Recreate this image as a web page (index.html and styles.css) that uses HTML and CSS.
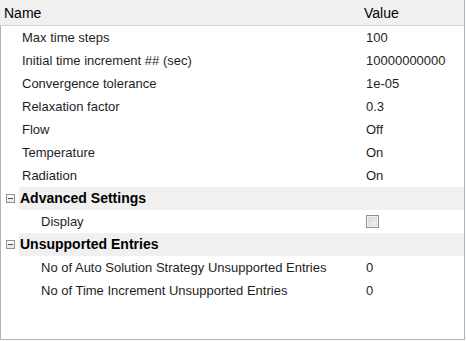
FILE: index.html
```html
<!DOCTYPE html>
<html lang="en">
<head>
    <meta charset="UTF-8">
    <title>Property Grid</title>
    <link rel="stylesheet" href="styles.css">
</head>
<body>
    <div class="tree">
        <div class="head">
            <div class="col-name">Name</div>
            <div class="col-value">Value</div>
        </div>

        <div class="body">
            <div class="row"><div class="name">Max time steps</div><div class="value">100</div></div>
            <div class="row"><div class="name">Initial time increment ## (sec)</div><div class="value">10000000000</div></div>
            <div class="row"><div class="name">Convergence tolerance</div><div class="value">1e-05</div></div>
            <div class="row"><div class="name">Relaxation factor</div><div class="value">0.3</div></div>
            <div class="row"><div class="name">Flow</div><div class="value">Off</div></div>
            <div class="row"><div class="name">Temperature</div><div class="value">On</div></div>
            <div class="row"><div class="name">Radiation</div><div class="value">On</div></div>

            <div class="group">
                <span class="expander"></span>
                <div class="group-band">Advanced Settings</div>
            </div>
            <div class="row child"><div class="name">Display</div><div class="value"><span class="checkbox"></span></div></div>

            <div class="group">
                <span class="expander"></span>
                <div class="group-band">Unsupported Entries</div>
            </div>
            <div class="row child"><div class="name">No of Auto Solution Strategy Unsupported Entries</div><div class="value">0</div></div>
            <div class="row child"><div class="name">No of Time Increment Unsupported Entries</div><div class="value">0</div></div>
        </div>
    </div>
</body>
</html>
```

FILE: styles.css
```css
:root {
    --frame-color: #abb3bb;
    --header-bg: #f0f0f0;
    --header-line: #d5d5d5;
    --band-bg: #f0f0f0;
    --text-color: #1e1e1e;
}

body {
    margin: 0;
    padding: 0;
    background: #fff;
    font-family: 'Liberation Sans', Arial, sans-serif;
    font-size: 13px;
    color: var(--text-color);
}

.tree {
    width: 464px;
    height: 340px;
    display: flex;
    flex-direction: column;
    border-right: 1px solid var(--frame-color);
}

.head {
    display: grid;
    grid-template-columns: 364px 1fr;
    height: 25px;
    align-items: center;
    background-color: var(--header-bg);
    border-bottom: 1px solid var(--header-line);
    font-size: 14px;
    color: #000;
}

.col-name {
    padding-left: 4px;
}

.body {
    flex: 1;
    border-left: 1px solid var(--frame-color);
    border-bottom: 1px solid var(--frame-color);
}

.row {
    display: grid;
    grid-template-columns: 365px 1fr;
    height: 23px;
    align-items: center;
}

.row .name {
    padding-left: 21px;
    white-space: nowrap;
}

.row.child .name {
    padding-left: 40px;
}

.group {
    display: flex;
    align-items: center;
    height: 23px;
}

.expander {
    position: relative;
    box-sizing: border-box;
    width: 9px;
    height: 9px;
    margin: 0 4px 0 5px;
    border: 1px solid #8e8f8f;
    background: linear-gradient(#fff, #e6e6e6);
}

.expander::after {
    content: '';
    position: absolute;
    left: 1px;
    top: 3px;
    width: 5px;
    height: 1px;
    background: #3c4a78;
}

.group-band {
    flex: 1;
    height: 23px;
    line-height: 23px;
    padding-left: 1px;
    background-color: var(--band-bg);
    font-weight: 700;
    font-size: 14px;
    color: #000;
}

.checkbox {
    display: block;
    box-sizing: border-box;
    width: 13px;
    height: 13px;
    border: 1px solid #8e8f8f;
    background: linear-gradient(135deg, #d8d8d8, #f6f6f6);
    box-shadow: inset 0 0 0 1px #f4f4f4, inset 0 0 0 2px #dcdcdc;
}
```
